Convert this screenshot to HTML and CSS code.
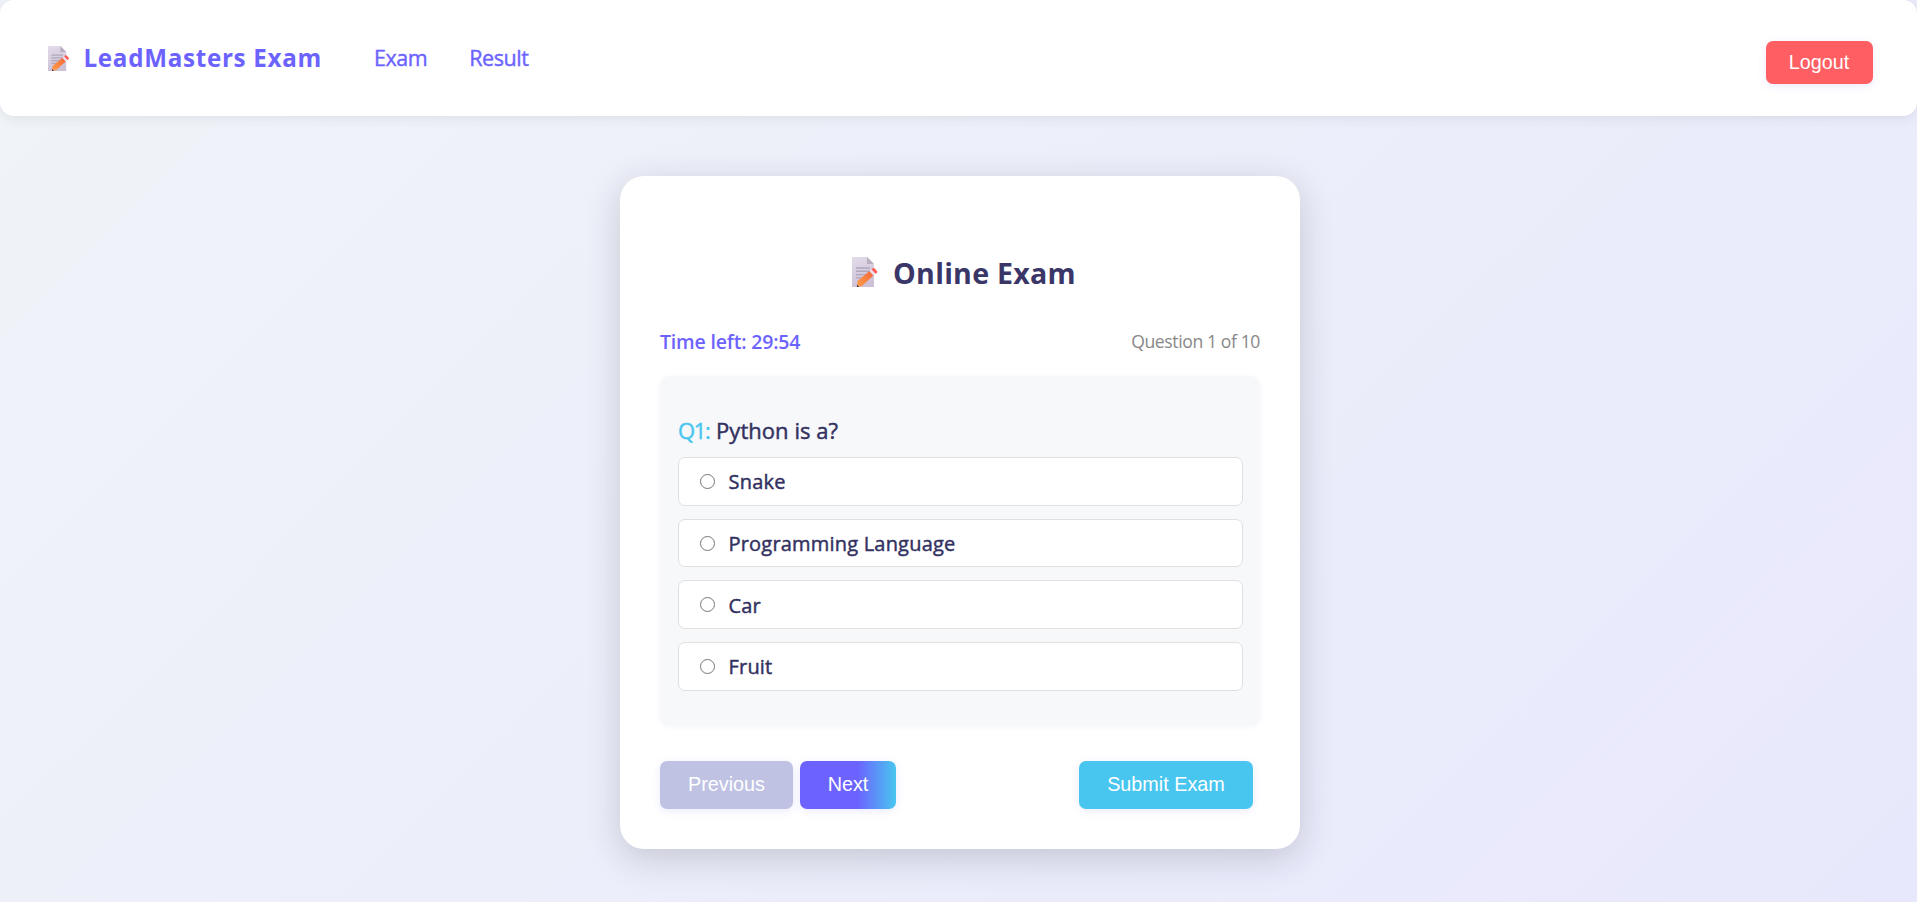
FILE: index.html
```html
<!DOCTYPE html>
<html lang="en">
<head>
<meta charset="utf-8">
<title>LeadMasters Exam</title>
<link rel="stylesheet" href="styles.css">
</head>
<body>
<svg class="defs" aria-hidden="true">
  <defs>
    <linearGradient id="paper" x1="0" y1="0" x2="0.3" y2="1"><stop offset="0" stop-color="#e3dcea"/><stop offset="1" stop-color="#cdc1d8"/></linearGradient>
    <linearGradient id="wood" x1="1" y1="0" x2="0" y2="1"><stop offset="0" stop-color="#f4653a"/><stop offset="1" stop-color="#ffa04a"/></linearGradient>
  </defs>
  <symbol id="memo" viewBox="0 0 26 30">
    <path d="M0 0H15L22 7V30H0Z" fill="url(#paper)"/>
    <path d="M15 0L22 7H15Z" fill="#b7aebf"/>
    <path d="M4 11H18M4 14.3H18M4 17.6H15M4 20.9H12" stroke="#b0a8ba" stroke-width="1.4"/>
    <path d="M5.500 24L17.500 14L21.500 18.500L10 29L5 30Z" fill="url(#wood)"/>
    <path d="M17.500 14L19.500 12.300L23.500 16.800L21.500 18.500Z" fill="#eadff0"/>
    <path d="M19.500 12.300L21 11.200Q22 10.700 23 11.800L25 14.200Q25.700 15.200 25 15.800L23.500 16.800Z" fill="#ff5a50"/>
    <path d="M5.200 27.500L7 30H4.800Z" fill="#4b2b45"/>
  </symbol>
</svg>
<header class="navbar">
  <div class="brand"><svg class="brand-icon"><use href="#memo"/></svg><span class="brand-name">LeadMasters Exam</span></div>
  <nav class="links"><a class="link">Exam</a><a class="link">Result</a></nav>
  <button class="btn logout">Logout</button>
</header>
<main class="card">
  <h1 class="title"><svg class="title-icon"><use href="#memo"/></svg><span>Online Exam</span></h1>
  <div class="status"><span class="time">Time left: 29:54</span><span class="progress">Question 1 of 10</span></div>
  <section class="question">
    <h2 class="prompt"><span class="number">Q1:</span> Python is a?</h2>
    <label class="option"><input class="radio" type="radio" name="q1"><span>Snake</span></label>
    <label class="option"><input class="radio" type="radio" name="q1"><span>Programming Language</span></label>
    <label class="option"><input class="radio" type="radio" name="q1"><span>Car</span></label>
    <label class="option"><input class="radio" type="radio" name="q1"><span>Fruit</span></label>
  </section>
  <div class="actions">
    <button class="btn previous">Previous</button>
    <button class="btn next">Next</button>
    <button class="btn submit">Submit Exam</button>
  </div>
</main>
</body>
</html>
```
FILE: styles.css
```css
* { box-sizing: border-box; }
body {
  margin: 0;
  height: 902px;
  overflow: hidden;
  font-family: "Open Sans", "Noto Sans", sans-serif;
  background: linear-gradient(135deg, #f0f4f8 0%, #e8e8fc 100%);
}
.defs { position: absolute; width: 0; height: 0; }
.navbar {
  display: flex;
  align-items: center;
  height: 116px;
  padding: 0 44px 0 48px;
  background: #fff;
  border-radius: 14px;
  box-shadow: 0 2px 13px rgba(0, 0, 0, 0.08);
}
.brand { display: flex; align-items: center; width: 326px; }
.brand-icon { width: 21.500px; height: 25px; margin-right: 14px; }
.brand-name { padding-bottom: 2px; font-size: 24.200px; font-weight: 700; letter-spacing: 0.7px; color: #6c63ff; white-space: nowrap; }
.links { display: flex; gap: 42px; flex: 1; padding-bottom: 2px; }
.link { font-size: 21.500px; letter-spacing: -0.45px; color: #6c63ff; -webkit-text-stroke: 0.4px; }
.btn {
  height: 48px;
  border: 0;
  padding: 0 0 2px;
  border-radius: 7px;
  font: 19.800px "Liberation Sans", Arial, sans-serif;
  color: #fff;
  box-shadow: 0 2px 9px rgba(108, 99, 255, 0.13);
}
.logout { width: 107px; height: 43px; padding: 0 1px 1px 0; margin-top: 9px; background: #ff5e62; }
.card {
  width: 680px;
  height: 673px;
  margin: 60px 0 0 620px;
  padding: 71px 40px 40px;
  background: #fff;
  border-radius: 24px;
  box-shadow: 0 9px 35px rgba(30, 30, 50, 0.19);
}
.title {
  display: flex;
  align-items: center;
  justify-content: center;
  height: 50px;
  margin: 0;
  padding-left: 8px;
  color: #3a3768;
  font-size: 28.600px;
  letter-spacing: 0.25px;
}
.title-icon { width: 26px; height: 30px; margin-right: 15px; }
.status { display: flex; align-items: center; justify-content: space-between; height: 36px; margin-top: 26px; }
.time { font-size: 19.500px; font-weight: 600; color: #6c63ff; letter-spacing: -0.18px; }
.progress { font-size: 17.600px; color: #888; letter-spacing: -0.4px; }
.question {
  display: flex;
  flex-direction: column;
  gap: 13px;
  height: 350px;
  margin-top: 17px;
  padding: 34px 17px 0 18px;
  background: #f7f8fa;
  border-radius: 10px;
  box-shadow: 0 1px 5px rgba(108, 99, 255, 0.06);
}
.prompt {
  height: 40px;
  margin: 0 0 -6px;
  line-height: 40px;
  font-size: 22px;
  font-weight: 400;
  letter-spacing: 0.05px;
  color: #33315f;
  -webkit-text-stroke: 0.45px;
}
.number { color: #48c6ef; letter-spacing: -1.4px; margin-right: 1px; }
.option {
  display: flex;
  align-items: center;
  height: 48.700px;
  padding: 0 21px;
  gap: 13.500px;
  border: 1px solid #e0e0e3;
  border-radius: 7px;
  background: #fff;
  font-size: 20px;
  letter-spacing: 0.2px;
  color: #33315f;
  -webkit-text-stroke: 0.45px;
}
.option span { padding-top: 1px; }
.radio { appearance: none; width: 15px; height: 15px; margin: 0; border: 1px solid #767676; border-radius: 50%; background: #fff; }
.actions { display: flex; gap: 7px; margin-top: 35px; padding-right: 7px; }
.previous { width: 133px; background: #c0c2e3; }
.next { width: 96px; background: linear-gradient(90deg, #6c63ff 60%, #48c6ef 100%); }
.submit { width: 174px; margin-left: auto; background: #48c6ef; }
```
